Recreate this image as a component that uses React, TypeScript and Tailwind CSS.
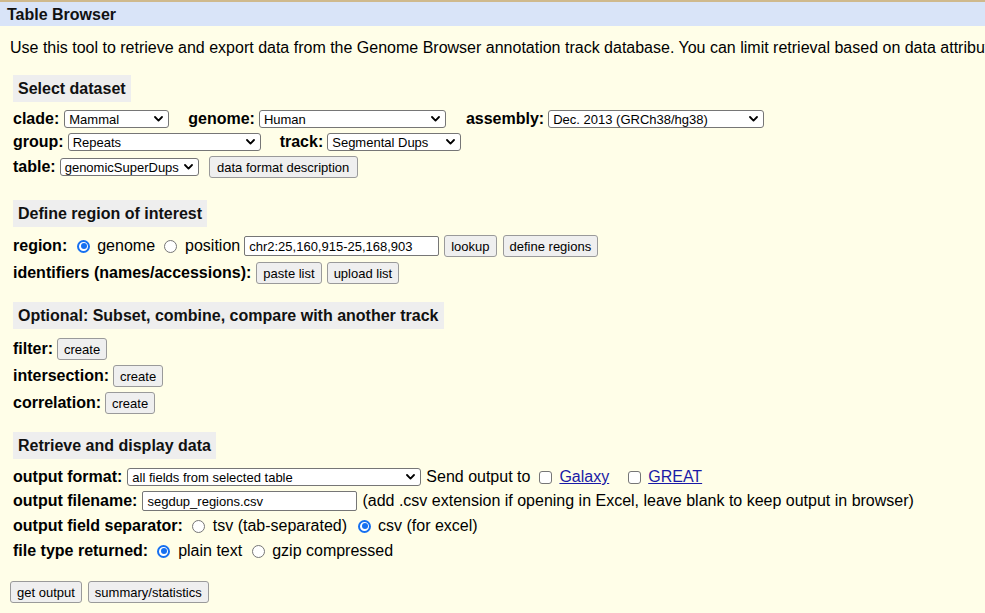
import React from "react";

function Chevron() {
  return (
    <svg width="9" height="6" viewBox="0 0 9 6" className="shrink-0">
      <path d="M1 1 L4.5 4.6 L8 1" fill="none" stroke="#000" strokeWidth="1.8" strokeLinecap="round" strokeLinejoin="round" />
    </svg>
  );
}

function Select({ text, className }: { text: string; className: string }) {
  return (
    <div
      className={
        "h-[18px] flex items-center justify-between bg-white border border-[#767676] rounded-[3px] pl-[4px] pr-[5px] text-[13px] leading-none font-normal text-black shrink-0 " +
        className
      }
    >
      <span className="whitespace-nowrap">{text}</span>
      <Chevron />
    </div>
  );
}

function Btn({ text, className = "" }: { text: string; className?: string }) {
  return (
    <div
      className={
        "h-[22px] flex items-center px-[6px] bg-[#efefef] border border-[#9a9a9a] rounded-[3px] text-[13px] leading-none font-normal text-black whitespace-nowrap shrink-0 " +
        className
      }
    >
      {text}
    </div>
  );
}

function Input({ text, className }: { text: string; className: string }) {
  return (
    <div
      className={
        "h-[20px] flex items-center bg-white border border-[#767676] rounded-[2px] px-[4px] text-[13px] leading-none font-normal text-black whitespace-nowrap shrink-0 " +
        className
      }
    >
      {text}
    </div>
  );
}

function Radio({ checked, className = "" }: { checked?: boolean; className?: string }) {
  if (checked) {
    return (
      <span
        className={
          "w-[13px] h-[13px] rounded-full border-[2px] border-[#1670f0] bg-white flex items-center justify-center shrink-0 " +
          className
        }
      >
        <span className="w-[6px] h-[6px] rounded-full bg-[#1670f0]" />
      </span>
    );
  }
  return (
    <span
      className={
        "w-[13px] h-[13px] rounded-full border border-[#767676] bg-white shrink-0 " + className
      }
    />
  );
}

function Checkbox({ className = "" }: { className?: string }) {
  return (
    <span
      className={
        "w-[13px] h-[13px] rounded-[3px] border border-[#767676] bg-white shrink-0 " + className
      }
    />
  );
}

function Heading({ text }: { text: string }) {
  return (
    <div className="flex">
      <div className="h-[27px] flex items-center px-[5px] bg-[#eeeeee] font-bold text-[16px] text-[#111]">
        {text}
      </div>
    </div>
  );
}

export default function App() {
  return (
    <div className="min-h-screen w-full overflow-hidden bg-[#fffee8] text-black text-[16px] leading-[18px] font-['Liberation_Sans',Arial,sans-serif]">
      {/* title bar */}
      <div className="h-[26px] border-t-[2px] border-[#cfb98d] bg-[#d9e4f8] flex items-center pl-[7px] pt-[2px]">
        <span className="font-bold text-[16px] text-[#111]">Table Browser</span>
      </div>

      <div className="mt-[13px] pl-[10px] whitespace-nowrap">
        Use this tool to retrieve and export data from the Genome Browser annotation track database. You can limit retrieval based on data attributes and intersection or union with another track, as described in the User's Guide.
      </div>

      <div className="pl-[13px] mt-[18px]">
        <Heading text="Select dataset" />

        <div className="mt-[6px] h-[22px] flex items-center font-bold whitespace-nowrap">
          <span>clade:</span>
          <Select text="Mammal" className="ml-[5px] w-[105px]" />
          <span className="ml-[19px]">genome:</span>
          <Select text="Human" className="ml-[4px] w-[187px]" />
          <span className="ml-[20px]">assembly:</span>
          <Select text="Dec. 2013 (GRCh38/hg38)" className="ml-[4px] w-[216px]" />
        </div>

        <div className="mt-[1px] h-[22px] flex items-center font-bold whitespace-nowrap">
          <span>group:</span>
          <Select text="Repeats" className="ml-[4px] w-[193px]" />
          <span className="ml-[19px]">track:</span>
          <Select text="Segmental Dups" className="ml-[4px] w-[134px]" />
        </div>

        <div className="mt-[3px] h-[22px] flex items-center font-bold whitespace-nowrap">
          <span>table:</span>
          <Select text="genomicSuperDups" className="ml-[4px] w-[139px]" />
          <Btn text="data format description" className="ml-[10px] w-[149px] justify-center" />
        </div>

        <div className="mt-[22px]">
          <Heading text="Define region of interest" />
        </div>

        <div className="mt-[8px] h-[22px] flex items-center whitespace-nowrap">
          <span className="font-bold">region:</span>
          <Radio checked className="ml-[10px]" />
          <span className="ml-[7px]">genome</span>
          <Radio className="ml-[9px]" />
          <span className="ml-[8px]">position</span>
          <Input text="chr2:25,160,915-25,168,903" className="ml-[4px] w-[195px]" />
          <Btn text="lookup" className="ml-[5px]" />
          <Btn text="define regions" className="ml-[6px]" />
        </div>

        <div className="mt-[5px] h-[22px] flex items-center whitespace-nowrap">
          <span className="font-bold">identifiers (names/accessions):</span>
          <Btn text="paste list" className="ml-[5px]" />
          <Btn text="upload list" className="ml-[5px]" />
        </div>

        <div className="mt-[18px]">
          <Heading text="Optional: Subset, combine, compare with another track" />
        </div>

        <div className="mt-[9px] h-[22px] flex items-center whitespace-nowrap">
          <span className="font-bold">filter:</span>
          <Btn text="create" className="ml-[4px]" />
        </div>
        <div className="mt-[5px] h-[22px] flex items-center whitespace-nowrap">
          <span className="font-bold">intersection:</span>
          <Btn text="create" className="ml-[4px]" />
        </div>
        <div className="mt-[5px] h-[22px] flex items-center whitespace-nowrap">
          <span className="font-bold">correlation:</span>
          <Btn text="create" className="ml-[4px]" />
        </div>

        <div className="mt-[18px]">
          <Heading text="Retrieve and display data" />
        </div>

        <div className="mt-[7px] h-[22px] flex items-center whitespace-nowrap">
          <span className="font-bold">output format:</span>
          <Select text="all fields from selected table" className="ml-[5px] w-[294px]" />
          <span className="ml-[5px]">Send output to</span>
          <Checkbox className="ml-[9px]" />
          <span className="ml-[7px] underline text-[#1a1aa6]">Galaxy</span>
          <Checkbox className="ml-[19px]" />
          <span className="ml-[7px] underline text-[#1a1aa6]">GREAT</span>
        </div>

        <div className="mt-[2px] h-[22px] flex items-center whitespace-nowrap">
          <span className="font-bold">output filename:</span>
          <Input text="segdup_regions.csv" className="ml-[5px] w-[215px]" />
          <span className="ml-[5px]">(add .csv extension if opening in Excel, leave blank to keep output in browser)</span>
        </div>

        <div className="mt-[3px] h-[22px] flex items-center whitespace-nowrap">
          <span className="font-bold">output field separator:</span>
          <Radio className="ml-[9px]" />
          <span className="ml-[8px]">tsv (tab-separated)</span>
          <Radio checked className="ml-[11px]" />
          <span className="ml-[7px]">csv (for excel)</span>
        </div>

        <div className="mt-[3px] h-[22px] flex items-center whitespace-nowrap">
          <span className="font-bold">file type returned:</span>
          <Radio checked className="ml-[9px]" />
          <span className="ml-[8px]">plain text</span>
          <Radio className="ml-[10px]" />
          <span className="ml-[7px]">gzip compressed</span>
        </div>
      </div>

      <div className="pl-[10px] mt-[19px] flex items-center gap-[6px] pb-[10px]">
        <Btn text="get output" />
        <Btn text="summary/statistics" />
      </div>
    </div>
  );
}
